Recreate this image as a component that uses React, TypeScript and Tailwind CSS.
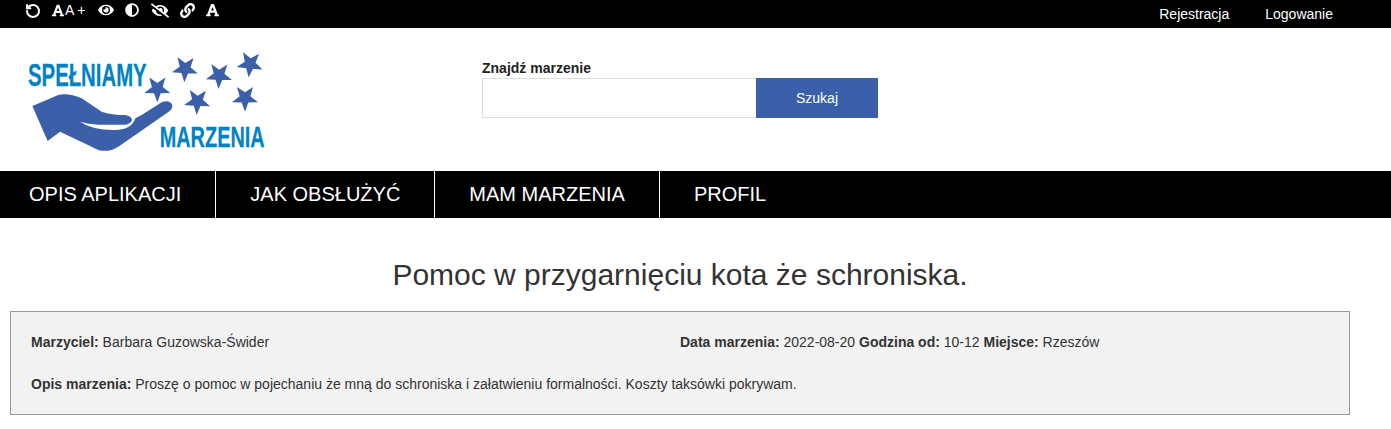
import React from 'react'
import { RotateCcw } from 'lucide-react'
import { FaAdjust, FaEye, FaEyeSlash, FaFont, FaLink } from 'react-icons/fa'

const stars = [
  [442, 146, 0],
  [525, 86, -0.05],
  [627, 106, -0.03],
  [720, 72, -0.1],
  [562, 184, -0.05],
  [705, 174, 0],
]

const starPoints = (cx: number, cy: number, rot: number) => {
  const pts: string[] = []
  for (let i = 0; i < 10; i++) {
    const r = i % 2 === 0 ? 41 : 17
    const a = (Math.PI / 5) * i + rot
    pts.push(`${cx + r * Math.sin(a)},${cy + r * Math.cos(a)}`)
  }
  return pts.join(' ')
}

const Logo = () => (
  <svg width="280" height="125" viewBox="0 0 840 375" className="block">
    <text transform="translate(54 138) scale(1 1.5)" textLength="356" lengthAdjust="spacingAndGlyphs" fontFamily="Liberation Sans" fontWeight="700" fontSize="61" fill="#0082c3" stroke="#0082c3" strokeWidth="0.5">
      SPEŁNIAMY
    </text>
    <text transform="translate(449 322) scale(1 1.5)" textLength="315" lengthAdjust="spacingAndGlyphs" fontFamily="Liberation Sans" fontWeight="700" fontSize="60" fill="#0082c3" stroke="#0082c3" strokeWidth="0.5">
      MARZENIA
    </text>
    {stars.map(([x, y, r]) => (
      <polygon key={x} points={starPoints(x, y, r)} fill="#3b5fa8" />
    ))}
    <path
      d="M67 198 L145 165 Q175 158 215 175 L275 215 Q305 225 345 225 Q365 228 366 240 Q362 253 345 254 L265 254 Q235 252 210 245 Q250 272 320 270 Q365 268 376 235 L395 225 L455 187 Q478 178 487 195 Q488 208 475 216 L325 320 Q285 345 245 320 L150 275 L113 303 Z"
      fill="#3b5fa8"
    />
  </svg>
)

const App: React.FC = () => {
  return (
    <div className="min-h-screen bg-white font-['Liberation_Sans',Arial,sans-serif] text-[14px] text-[#333333]">
      <div className="h-7 bg-black text-white flex justify-between pl-[26px] pr-[58px]">
        <div className="flex items-start pt-[2px] h-full">
          <RotateCcw size={16} strokeWidth={3} className="-ml-px mt-px" />
          <FaFont preserveAspectRatio="none" className="w-3 h-[13px] ml-[11px] mt-[2px]" />
          <span className="text-[14px] leading-[15px] ml-px mt-px">A</span>
          <span className="text-[14px] leading-[15px] ml-[3px] mt-px">+</span>
          <FaEye className="w-4 h-[14px] ml-[12px] mt-px" />
          <FaAdjust className="w-[14px] h-[14px] ml-[11px] mt-px" />
          <FaEyeSlash className="w-[18px] h-[15px] ml-[12px] mt-px" />
          <FaLink className="w-[15px] h-[15px] ml-[11px] mt-px" />
          <FaFont preserveAspectRatio="none" className="w-[13px] h-[14px] ml-[11px] mt-px" />
        </div>
        <nav className="flex gap-9 pt-[6px] leading-4">
          <span>Rejestracja</span>
          <span>Logowanie</span>
        </nav>
      </div>

      <header className="h-[143px] flex">
        <div className="w-[482px] pl-[10px] pt-3">
          <Logo />
        </div>
        <div className="pt-[32px]">
          <label className="block font-bold leading-4 text-[#222222]">Znajdź marzenie</label>
          <div className="flex h-10 mt-[2px]">
            <input className="w-[274px] h-10 bg-white border border-[#dcdcdc] border-r-0 outline-none" />
            <button className="w-[122px] h-10 bg-[#3b5fa8] text-white">Szukaj</button>
          </div>
        </div>
      </header>

      <nav className="h-[47px] bg-black text-white text-[20px] flex pl-[29px]">
        <div className="pr-[34px] leading-[47px] border-r border-white">OPIS APLIKACJI</div>
        <div className="px-[34px] leading-[47px] border-r border-white">JAK OBSŁUŻYĆ</div>
        <div className="px-[34px] leading-[47px] border-r border-white">MAM MARZENIA</div>
        <div className="px-[34px] leading-[47px]">PROFIL</div>
      </nav>

      <main className="pl-[10px] pr-[41px]">
        <h1 className="text-[30px] leading-[34px] text-center pt-10 mb-[19px] text-[#333333]">Pomoc w przygarnięciu kota że schroniska.</h1>
        <section className="h-[104px] bg-[#f2f2f2] border border-[#999999] px-5 pt-[22px]">
          <div className="flex leading-4">
            <div className="w-[649px]">
              <b>Marzyciel:</b> Barbara Guzowska-Świder
            </div>
            <div>
              <b>Data marzenia:</b> 2022-08-20 <b>Godzina od:</b> 10-12 <b>Miejsce:</b> Rzeszów
            </div>
          </div>
          <p className="leading-4 mt-[26px]">
            <b>Opis marzenia:</b> Proszę o pomoc w pojechaniu że mną do schroniska i załatwieniu formalności. Koszty taksówki pokrywam.
          </p>
        </section>
      </main>
    </div>
  )
}

export default App
